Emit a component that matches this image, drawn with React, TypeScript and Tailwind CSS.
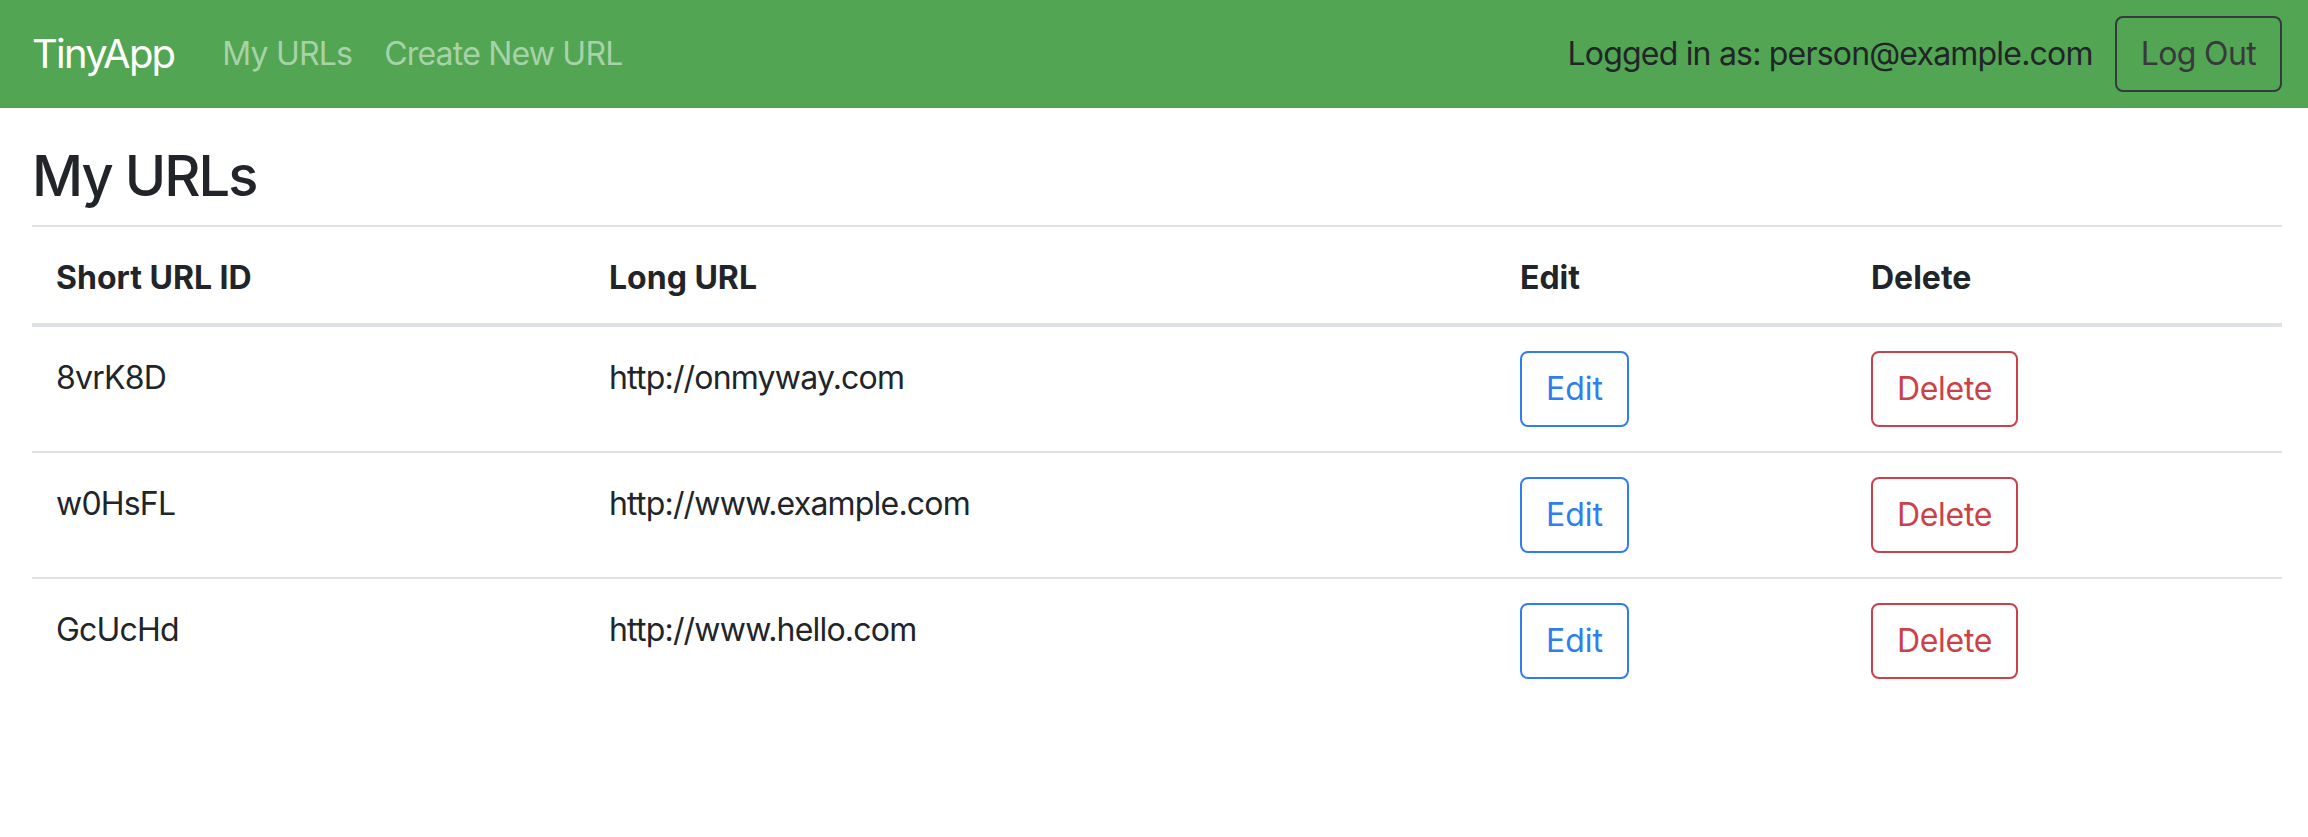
import React from 'react';

type UrlRow = { id: string; longUrl: string };

const urls: UrlRow[] = [
  { id: '8vrK8D', longUrl: 'http://onmyway.com' },
  { id: 'w0HsFL', longUrl: 'http://www.example.com' },
  { id: 'GcUcHd', longUrl: 'http://www.hello.com' },
];

function Navbar() {
  return (
    <nav className="flex h-[108px] items-center bg-[#52a552] pl-8 pr-[26px]">
      <a className="mr-8 text-[40px] leading-[60px] tracking-[-0.045em] text-white">TinyApp</a>
      <a className="px-4 text-[32px] leading-[48px] tracking-[-0.025em] text-[#a8d2a8]">My URLs</a>
      <a className="px-4 text-[32px] leading-[48px] tracking-[-0.025em] text-[#a8d2a8]">Create New URL</a>
      <div className="ml-auto flex items-center">
        <span className="text-[32px] leading-[48px] tracking-[-0.025em] text-[#212529]">
          Logged in as: person@example.com
        </span>
        <button className="ml-[22px] h-[76px] rounded-lg border-2 border-[#38393d] px-6 text-[32px] leading-[48px] tracking-[-0.02em] text-[#38393d]">
          Log Out
        </button>
      </div>
    </nav>
  );
}

export default function App() {
  return (
    <div className="min-h-screen bg-white text-[#212529]" style={{ fontFamily: 'Inter, "Noto Sans", sans-serif' }}>
      <Navbar />
      <main className="pl-8 pr-[26px]">
        <h1 className="mt-[35px] mb-[15px] text-[56px] font-medium leading-[1.2] tracking-[-0.035em]">My URLs</h1>
        <table className="w-full table-fixed border-collapse text-left text-[32px] leading-[48px]">
          <thead>
            <tr>
              <th className="w-[553px] border-t-2 border-b-4 border-[#dee2e6] px-6 pt-[27px] pb-[21px] font-bold">Short URL ID</th>
              <th className="w-[911px] border-t-2 border-b-4 border-[#dee2e6] px-6 pt-[27px] pb-[21px] font-bold">Long URL</th>
              <th className="w-[351px] border-t-2 border-b-4 border-[#dee2e6] px-6 pt-[27px] pb-[21px] font-bold">Edit</th>
              <th className="border-t-2 border-b-4 border-[#dee2e6] px-6 pt-[27px] pb-[21px] font-bold">Delete</th>
            </tr>
          </thead>
          <tbody>
            {urls.map((u, i) => (
              <tr key={u.id}>
                <td className={`px-6 pt-[27px] pb-[21px] align-top tracking-[-0.025em] border-[#dee2e6] ${i === 0 ? '' : 'border-t-2'}`}>
                  {u.id}
                </td>
                <td className={`px-6 pt-[27px] pb-[21px] align-top tracking-[-0.025em] border-[#dee2e6] ${i === 0 ? '' : 'border-t-2'}`}>
                  {u.longUrl}
                </td>
                <td className={`p-6 align-top border-[#dee2e6] ${i === 0 ? '' : 'border-t-2'}`}>
                  <button className="h-[76px] rounded-lg border-2 border-[#2f7ef0] px-6 text-[32px] leading-[48px] text-[#2f7ef0]">
                    Edit
                  </button>
                </td>
                <td className={`p-6 align-top border-[#dee2e6] ${i === 0 ? '' : 'border-t-2'}`}>
                  <button className="h-[76px] rounded-lg border-2 border-[#cc4148] px-6 text-[32px] leading-[48px] tracking-[-0.01em] text-[#cc4148]">
                    Delete
                  </button>
                </td>
              </tr>
            ))}
          </tbody>
        </table>
      </main>
    </div>
  );
}
